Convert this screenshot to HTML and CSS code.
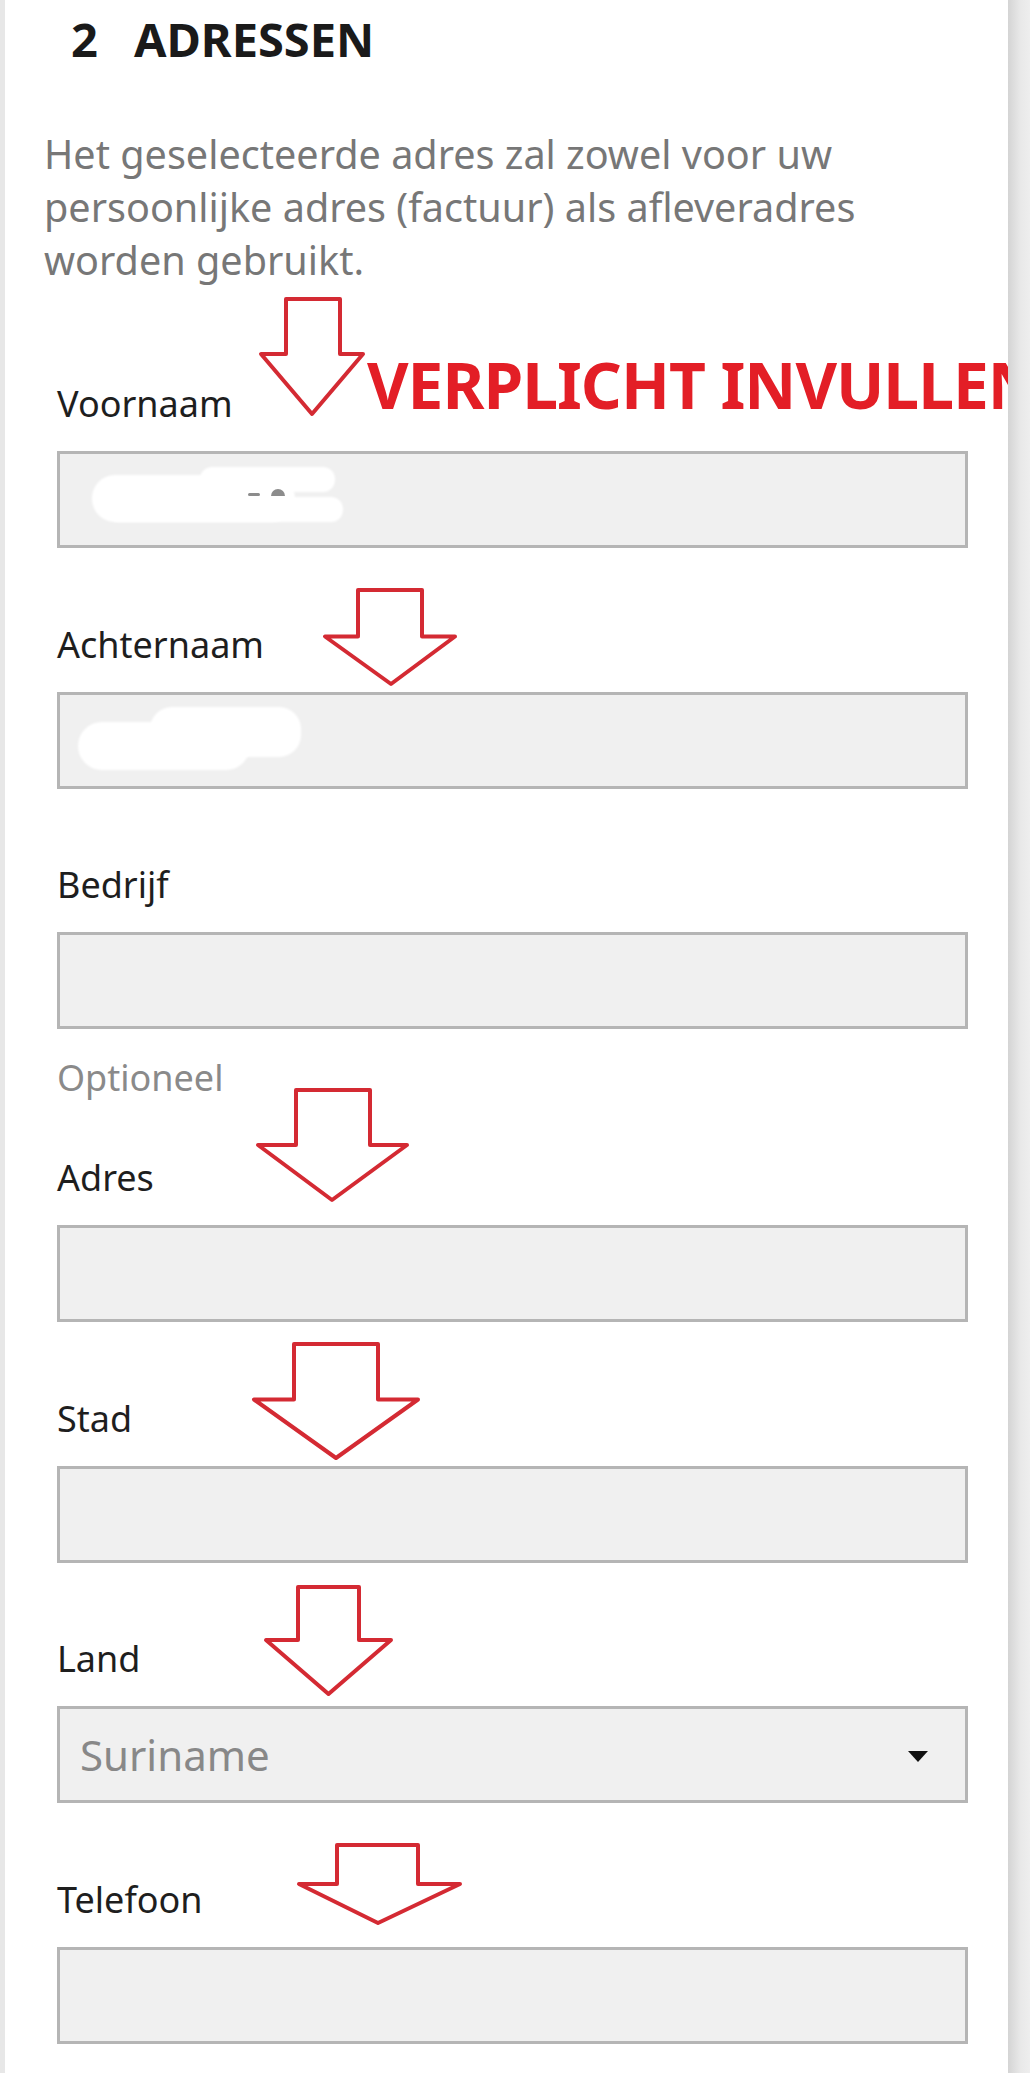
FILE: index.html
```html
<!DOCTYPE html>
<html lang="nl">
<head>
<meta charset="utf-8">
<title>Adressen</title>
<link rel="stylesheet" href="styles.css">
</head>
<body>
<div class="page">
  <div class="edge-left"></div>
  <main class="panel">
    <h2 class="section-title"><span class="step">2</span>ADRESSEN</h2>
    <p class="intro">Het geselecteerde adres zal zowel voor uw persoonlijke adres (factuur) als afleveradres worden gebruikt.</p>
    <form class="form">
      <div class="field">
        <label class="label" for="f-voornaam">Voornaam</label>
        <svg class="arrow arrow-1" width="106" height="119" viewBox="0 0 106 119"><polygon points="27,2 81,2 81,57 104,57 53,117 2,57 27,57"/></svg>
        <span class="callout">VERPLICHT INVULLEN</span>
        <div class="control">
          <input id="f-voornaam" class="input" type="text">
          <span class="smudge smudge-a"></span>
          <span class="smudge smudge-b"></span>
          <span class="smudge smudge-c"></span>
          <span class="mark mark-1"></span>
          <span class="mark mark-2"></span>
        </div>
      </div>
      <div class="field">
        <label class="label" for="f-achternaam">Achternaam</label>
        <svg class="arrow arrow-2" width="134" height="98" viewBox="0 0 134 98"><polygon points="35,2 99,2 99,48.5 132,48.5 68,96 2,48.5 35,48.5"/></svg>
        <div class="control">
          <input id="f-achternaam" class="input" type="text">
          <span class="smudge smudge-e"></span>
          <span class="smudge smudge-f"></span>
        </div>
      </div>
      <div class="field field-optional">
        <label class="label" for="f-bedrijf">Bedrijf</label>
        <div class="control">
          <input id="f-bedrijf" class="input" type="text">
        </div>
        <p class="hint">Optioneel</p>
      </div>
      <div class="field">
        <label class="label" for="f-adres">Adres</label>
        <svg class="arrow arrow-3" width="153" height="114" viewBox="0 0 153 114"><polygon points="40,2 114,2 114,57 151,57 76,112 2,57 40,57"/></svg>
        <div class="control">
          <input id="f-adres" class="input" type="text">
        </div>
      </div>
      <div class="field">
        <label class="label" for="f-stad">Stad</label>
        <svg class="arrow arrow-4" width="168" height="118" viewBox="0 0 168 118"><polygon points="42,2 126,2 126,57.5 166,57.5 84,116 2,57.5 42,57.5"/></svg>
        <div class="control">
          <input id="f-stad" class="input" type="text">
        </div>
      </div>
      <div class="field">
        <label class="label" for="f-land">Land</label>
        <svg class="arrow arrow-5" width="129" height="111" viewBox="0 0 129 111"><polygon points="34,2 95,2 95,55 127,55 64.5,109 2,55 34,55"/></svg>
        <div class="control control-select">
          <select id="f-land" class="input select">
            <option>Suriname</option>
          </select>
        </div>
      </div>
      <div class="field">
        <label class="label" for="f-telefoon">Telefoon</label>
        <svg class="arrow arrow-6" width="165" height="82" viewBox="0 0 165 82"><polygon points="40,2 121,2 121,41 163,41 81,80 2,41 40,41"/></svg>
        <div class="control">
          <input id="f-telefoon" class="input" type="tel">
        </div>
      </div>
    </form>
  </main>
  <div class="edge-right"></div>
</div>
</body>
</html>
```

FILE: styles.css
```css
* {
  box-sizing: border-box;
}

html,
body {
  margin: 0;
  padding: 0;
}

body {
  background: #ffffff;
  font-family: "Noto Sans", "Open Sans", sans-serif;
  overflow: hidden;
}

.page {
  display: flex;
  min-height: 2073px;
}

.edge-left {
  flex: none;
  width: 5px;
  background: #e7e7e7;
}

.edge-right {
  flex: none;
  width: 22px;
  background: linear-gradient(to right, #d4d4d4, #e8e8e8 55%, #eeeeee);
  position: relative;
  z-index: 2;
}

.panel {
  flex: 1;
  min-width: 0;
  padding-top: 7px;
}

.section-title {
  margin: 0 0 0 66px;
  font-size: 47px;
  line-height: 64px;
  font-weight: 700;
  color: #1a1a1a;
}

.step {
  margin-right: 36px;
}

.intro {
  margin: 57px 40px 0 39px;
  font-size: 39.6px;
  line-height: 53px;
  color: #777777;
}

.form {
  margin: 92px 40px 0 52px;
}

.field {
  position: relative;
  margin-bottom: 71.5px;
}

.field-optional {
  margin-bottom: 51px;
}

.label {
  display: block;
  font-size: 36px;
  line-height: 49px;
  color: #1e1e1e;
  margin-bottom: 23px;
}

.hint {
  margin: 24px 0 0;
  font-size: 36px;
  line-height: 49px;
  color: #8a8a8a;
}

.control {
  position: relative;
}

.input {
  display: block;
  width: 100%;
  height: 97px;
  margin: 0;
  padding: 0 20px;
  border: 3px solid #b5b5b5;
  border-radius: 0;
  background: #f0f0f0;
  font-family: "Noto Sans", "Open Sans", sans-serif;
  font-size: 42px;
  color: #888888;
  outline: none;
}

.select {
  appearance: none;
  -webkit-appearance: none;
}

.control-select::after {
  content: "";
  position: absolute;
  right: 40px;
  top: 45px;
  border-left: 10px solid transparent;
  border-right: 10px solid transparent;
  border-top: 11px solid #111111;
}

.callout {
  position: absolute;
  left: 310px;
  top: -26px;
  z-index: 1;
  font-size: 64px;
  line-height: 64px;
  font-weight: 700;
  letter-spacing: -1px;
  color: #e31e26;
  white-space: nowrap;
}

.arrow {
  position: absolute;
  overflow: visible;
}

.arrow polygon {
  fill: none;
  stroke: #d42a33;
  stroke-width: 4;
  stroke-linejoin: round;
}

.arrow-1 { left: 202px; top: -82px; }
.arrow-2 { left: 266px; top: -32px; }
.arrow-3 { left: 199px; top: -65px; }
.arrow-4 { left: 195px; top: -52px; }
.arrow-5 { left: 207px; top: -49px; }
.arrow-6 { left: 240px; top: -32px; }

.smudge {
  position: absolute;
  background: #ffffff;
  filter: blur(1px);
}

.smudge-a { left: 35px; top: 24px; width: 203px; height: 47px; border-radius: 23px; }
.smudge-b { left: 143px; top: 16px; width: 135px; height: 25px; border-radius: 12px; }
.smudge-c { left: 50px; top: 46px; width: 236px; height: 25px; border-radius: 12px; }
.smudge-e { left: 21px; top: 30px; width: 172px; height: 48px; border-radius: 24px; }
.smudge-f { left: 93px; top: 15px; width: 151px; height: 50px; border-radius: 22px; }

.mark {
  position: absolute;
  background: #8c8c8c;
}

.mark-1 { left: 191px; top: 42px; width: 12px; height: 3px; border-radius: 2px; }
.mark-2 { left: 214px; top: 38px; width: 14px; height: 7px; border-radius: 7px 7px 0 0; }
```
